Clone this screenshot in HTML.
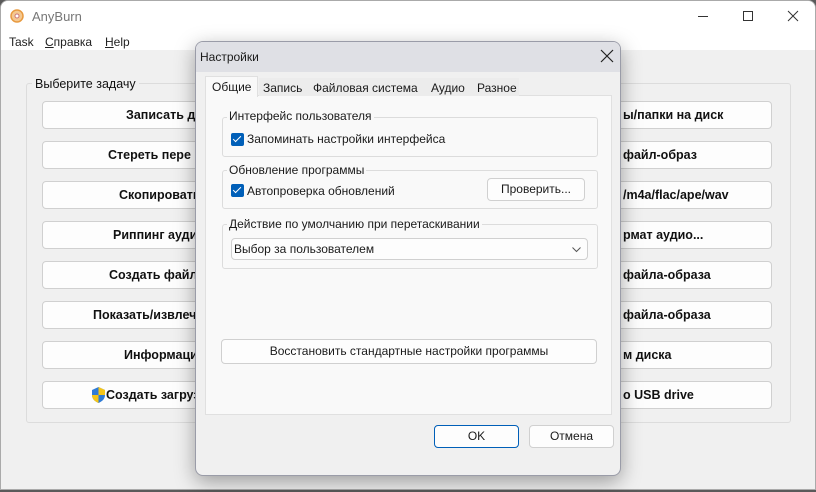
<!DOCTYPE html>
<html><head><meta charset="utf-8"><style>
*{box-sizing:border-box;margin:0;padding:0}
body{width:816px;height:492px;overflow:hidden;background:#5a5a5a;font-family:"Liberation Sans","DejaVu Sans",sans-serif;position:relative}
.win{position:absolute;left:0;top:0;width:816px;height:490px;background:#f0f0f0;border-radius:8px 8px 0 0;overflow:hidden;border:1px solid #aaa}
.title{position:absolute;left:0;top:0;width:816px;height:49px;background:#fff}
.a{position:absolute;white-space:nowrap}
.gb{position:absolute;border:1px solid #dcdcdc;border-radius:3px}
.btn{position:absolute;left:41px;width:730px;height:28px;background:#fdfdfd;border:1px solid #d0d0d0;border-radius:4px}
.bt{position:absolute;top:6px;font-size:12.5px;font-weight:bold;color:#111}
.dlg{position:absolute;left:195px;top:41px;width:426px;height:435px;background:#f0f0f0;border:1px solid #9a9ca8;border-radius:8px;overflow:hidden;box-shadow:0 6px 20px rgba(0,0,0,.35)}
.dt{position:absolute;left:0;top:0;width:426px;height:30px;background:#dfe0e5}
.f{font-size:12px;color:#1a1a1a}
.cb{position:absolute;width:13px;height:13px;background:#005fb8;border-radius:2px}
.cb:after{content:"";position:absolute;left:4px;top:1px;width:3px;height:7px;border:solid #fff;border-width:0 1.6px 1.6px 0;transform:rotate(45deg)}
.pb{position:absolute;background:#fdfdfd;border:1px solid #d0d0d0;border-radius:4px;font-size:12px;text-align:center;color:#1a1a1a}
</style></head><body>
<div class="win">
<div class="title">
<svg class="a" style="left:9px;top:8px" width="14" height="14"><circle cx="7" cy="7" r="6" fill="#f4c890" stroke="#e89a40" stroke-width="1.5"/><circle cx="7" cy="7" r="2" fill="#fff" stroke="#c77"/></svg>
<div class="a" style="left:31px;top:8px;font-size:13px;color:#777">AnyBurn</div>
<div class="a" style="left:697px;top:15px;width:10px;height:1px;background:#333"></div>
<div class="a" style="left:742px;top:10px;width:10px;height:10px;border:1px solid #333"></div>
<svg class="a" style="left:786px;top:9px" width="12" height="12"><path d="M1 1L11 11M11 1L1 11" stroke="#333" stroke-width="1"/></svg>
<div class="a" style="left:8px;top:34px;font-size:12px;color:#222">Task</div>
<div class="a" style="left:44px;top:34px;font-size:12px;color:#222"><u>С</u>правка</div>
<div class="a" style="left:104px;top:34px;font-size:12px;color:#222"><u>H</u>elp</div>
</div>
<div class="gb" style="left:25px;top:82px;width:765px;height:340px"></div>
<div class="a" style="left:31px;top:76px;font-size:12.5px;background:#f0f0f0;padding:0 3px;color:#111">Выберите задачу</div>
<div class="btn" style="top:100px"><span class="bt" style="left:83px">Записать ди</span><span class="bt" style="left:580px">ы/папки на диск</span></div>
<div class="btn" style="top:140px"><span class="bt" style="left:65px">Стереть пере</span><span class="bt" style="left:580px">файл-образ</span></div>
<div class="btn" style="top:180px"><span class="bt" style="left:76px">Скопировать</span><span class="bt" style="left:580px">/m4a/flac/ape/wav</span></div>
<div class="btn" style="top:220px"><span class="bt" style="left:70px">Риппинг аудио</span><span class="bt" style="left:580px">рмат аудио...</span></div>
<div class="btn" style="top:260px"><span class="bt" style="left:66px">Создать файл-</span><span class="bt" style="left:580px">файла-образа</span></div>
<div class="btn" style="top:300px"><span class="bt" style="left:50px">Показать/извлечь</span><span class="bt" style="left:580px">файла-образа</span></div>
<div class="btn" style="top:340px"><span class="bt" style="left:81px">Информация</span><span class="bt" style="left:580px">м диска</span></div>
<div class="btn" style="top:380px"><svg class="a" style="left:49px;top:5px" width="13" height="16"><path d="M6.5 0L13 3V8C13 12 10 14.5 6.5 16C3 14.5 0 12 0 8V3Z" fill="#2f7bd6"/><path d="M6.5 0V8H13V3Z M0 8H6.5V16C3 14.5 0 12 0 8Z" fill="#f5c518"/></svg><span class="bt" style="left:63px">Создать загруз</span><span class="bt" style="left:580px">o USB drive</span></div>
</div>
<div class="dlg">
<div class="dt"><div class="a f" style="left:4px;top:8px">Настройки</div>
<svg class="a" style="left:404px;top:7px" width="14" height="14"><path d="M1 1L13 13M13 1L1 13" stroke="#222" stroke-width="1.2"/></svg></div>
<div class="a" style="left:9px;top:53px;width:407px;height:320px;background:#f9f9f9;border:1px solid #e0e0e0"></div>
<div class="a" style="left:9px;top:34px;width:53px;height:21px;background:#f9f9f9;border:1px solid #e0e0e0;border-bottom:none"></div>
<div class="a" style="left:63px;top:36px;width:260px;height:18px;background:#ececec"></div>
<div class="a f" style="left:16px;top:38px">Общие</div>
<div class="a f" style="left:67px;top:39px">Запись</div>
<div class="a f" style="left:117px;top:39px">Файловая система</div>
<div class="a f" style="left:235px;top:39px">Аудио</div>
<div class="a f" style="left:281px;top:39px">Разное</div>
<div class="gb" style="left:26px;top:75px;width:376px;height:40px"></div>
<div class="a f" style="left:31px;top:67px;background:#f9f9f9;padding:0 2px">Интерфейс пользователя</div>
<div class="cb" style="left:35px;top:91px"></div><div class="a f" style="left:51px;top:90px">Запоминать настройки интерфейса</div>
<div class="gb" style="left:26px;top:128px;width:376px;height:39px"></div>
<div class="a f" style="left:31px;top:121px;background:#f9f9f9;padding:0 2px">Обновление программы</div>
<div class="cb" style="left:35px;top:142px"></div><div class="a f" style="left:51px;top:142px">Автопроверка обновлений</div>
<div class="pb" style="left:291px;top:136px;width:98px;height:23px;line-height:21px">Проверить...</div>
<div class="gb" style="left:26px;top:182px;width:376px;height:45px"></div>
<div class="a f" style="left:31px;top:175px;background:#f9f9f9;padding:0 2px">Действие по умолчанию при перетаскивании</div>
<div class="pb" style="left:35px;top:196px;width:357px;height:22px;text-align:left;padding-left:2px;line-height:20px">Выбор за пользователем
<svg class="a" style="right:6px;top:8px" width="9" height="6"><path d="M0.5 0.5L4.5 4.5L8.5 0.5" stroke="#555" fill="none"/></svg></div>
<div class="pb" style="left:25px;top:297px;width:376px;height:25px;line-height:23px">Восстановить стандартные настройки программы</div>
<div class="pb" style="left:238px;top:383px;width:85px;height:23px;line-height:21px;border:1px solid #005fb8">OK</div>
<div class="pb" style="left:333px;top:383px;width:85px;height:23px;line-height:21px">Отмена</div>
</div>
</body></html>
